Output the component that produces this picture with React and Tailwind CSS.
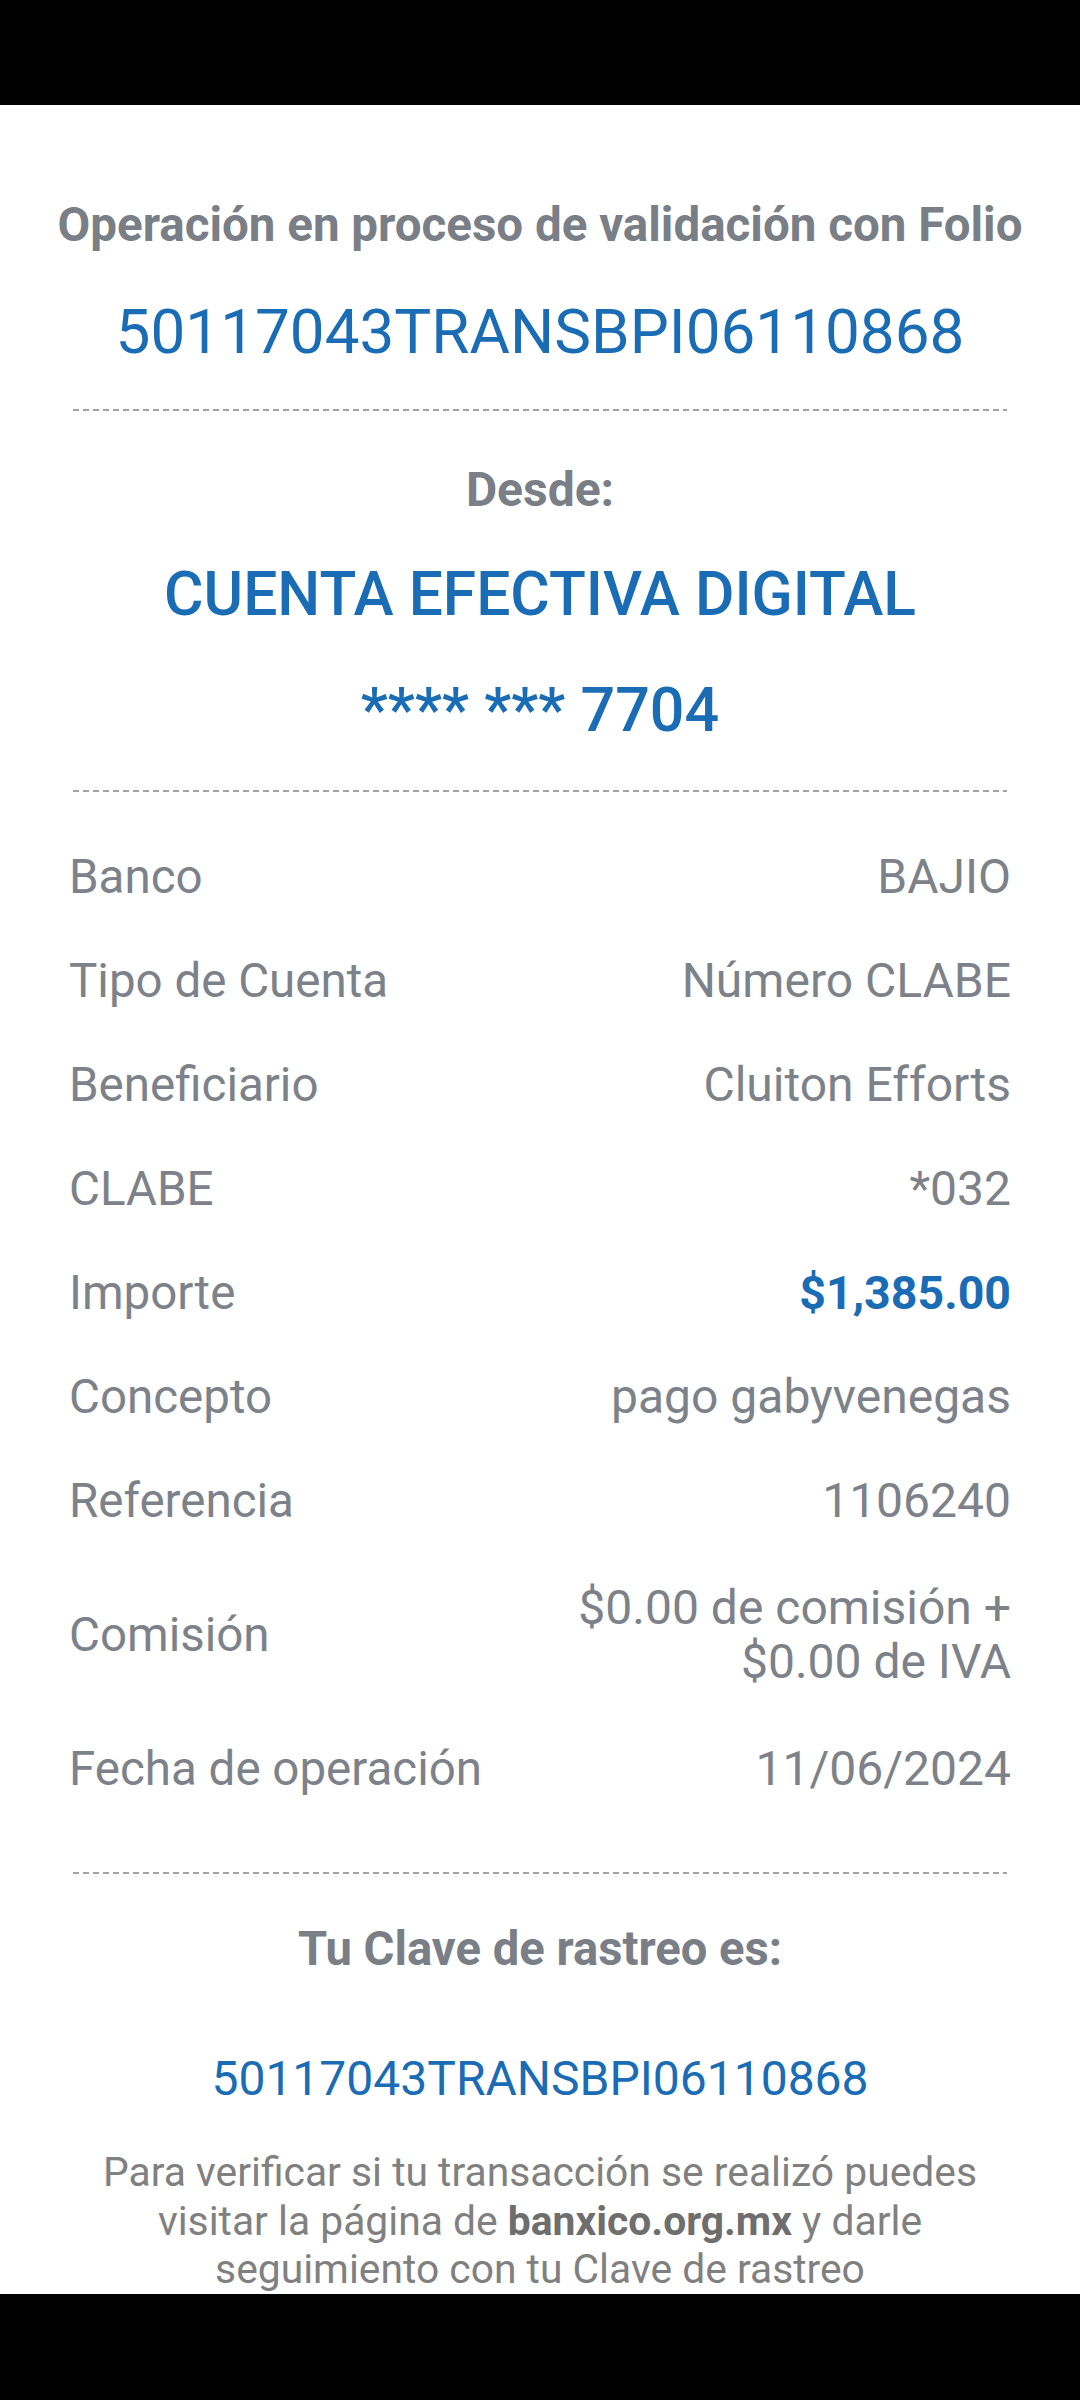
const rows = [
  { label: "Banco", value: "BAJIO" },
  { label: "Tipo de Cuenta", value: "Número CLABE" },
  { label: "Beneficiario", value: "Cluiton Efforts" },
  { label: "CLABE", value: "*032" },
  { label: "Importe", value: "$1,385.00", highlight: true },
  { label: "Concepto", value: "pago gabyvenegas" },
  { label: "Referencia", value: "1106240" },
]

const Dashed = ({ className }) => (
  <div
    className={`h-[2px] mx-[4px] bg-[repeating-linear-gradient(90deg,#a3a3a3_0px,#a3a3a3_6px,transparent_6px,transparent_10px)] ${className}`}
  />
)

const Row = ({ label, children }) => (
  <div className="flex items-center justify-between py-[28px]">
    <span className="text-[47.5px] leading-[48px] text-[#7d828a]">{label}</span>
    {children}
  </div>
)

export default function App() {
  return (
    <div className="h-[2400px] flex flex-col bg-white font-['Roboto','Liberation_Sans',sans-serif]">
      <div className="h-[105px] bg-black shrink-0" />

      <main className="flex-1 overflow-hidden px-[69px]">
        <h1 className="mt-[93px] -mx-[20px] text-center text-[47.5px] leading-[54px] font-bold text-[#7a7e86]">
          Operación en proceso de validación con Folio
        </h1>
        <p className="mt-[44px] text-center text-[62px] leading-[72px] text-[#1a6cb5]">
          50117043TRANSBPI06110868
        </p>

        <Dashed className="mt-[41px]" />

        <p className="mt-[51px] text-center text-[48px] leading-[56px] font-bold text-[#7a7e86]">
          Desde:
        </p>
        <p className="mt-[41px] text-center text-[60.5px] leading-[72px] font-medium text-[#1a6cb5]">
          CUENTA EFECTIVA DIGITAL
        </p>
        <p className="mt-[43px] text-center text-[61px] leading-[72px] font-medium text-[#1a6cb5]">
          **** *** 7704
        </p>

        <Dashed className="mt-[44px]" />

        <div className="mt-[33px]">
          {rows.map((r) => (
            <Row key={r.label} label={r.label}>
              <span
                className={`leading-[48px] text-right ${
                  r.highlight ? "text-[46.5px] font-bold text-[#1a6cb5]" : "text-[48px] text-[#7d828a]"
                }`}
              >
                {r.value}
              </span>
            </Row>
          ))}
          <Row label="Comisión">
            <span className="text-[48px] leading-[54px] text-right text-[#7d828a]">
              $0.00 de comisión +
              <br />
              $0.00 de IVA
            </span>
          </Row>
          <Row label="Fecha de operación">
            <span className="text-[48px] leading-[48px] text-right text-[#7d828a]">11/06/2024</span>
          </Row>
        </div>

        <Dashed className="mt-[51px]" />

        <p className="mt-[47px] text-center text-[47.2px] leading-[56px] font-bold text-[#7a7e86]">
          Tu Clave de rastreo es:
        </p>
        <p className="mt-[74px] text-center text-[48px] leading-[56px] text-[#1a6cb5]">
          50117043TRANSBPI06110868
        </p>
        <p className="mt-[41px] px-[14px] text-center text-[40.8px] leading-[48.5px] text-[#808080]">
          Para verificar si tu transacción se realizó puedes visitar la página de{" "}
          <span className="font-bold text-[#6e6e6e]">banxico.org.mx</span> y darle seguimiento con tu
          Clave de rastreo
        </p>
      </main>

      <div className="h-[106px] bg-black shrink-0" />
    </div>
  )
}
